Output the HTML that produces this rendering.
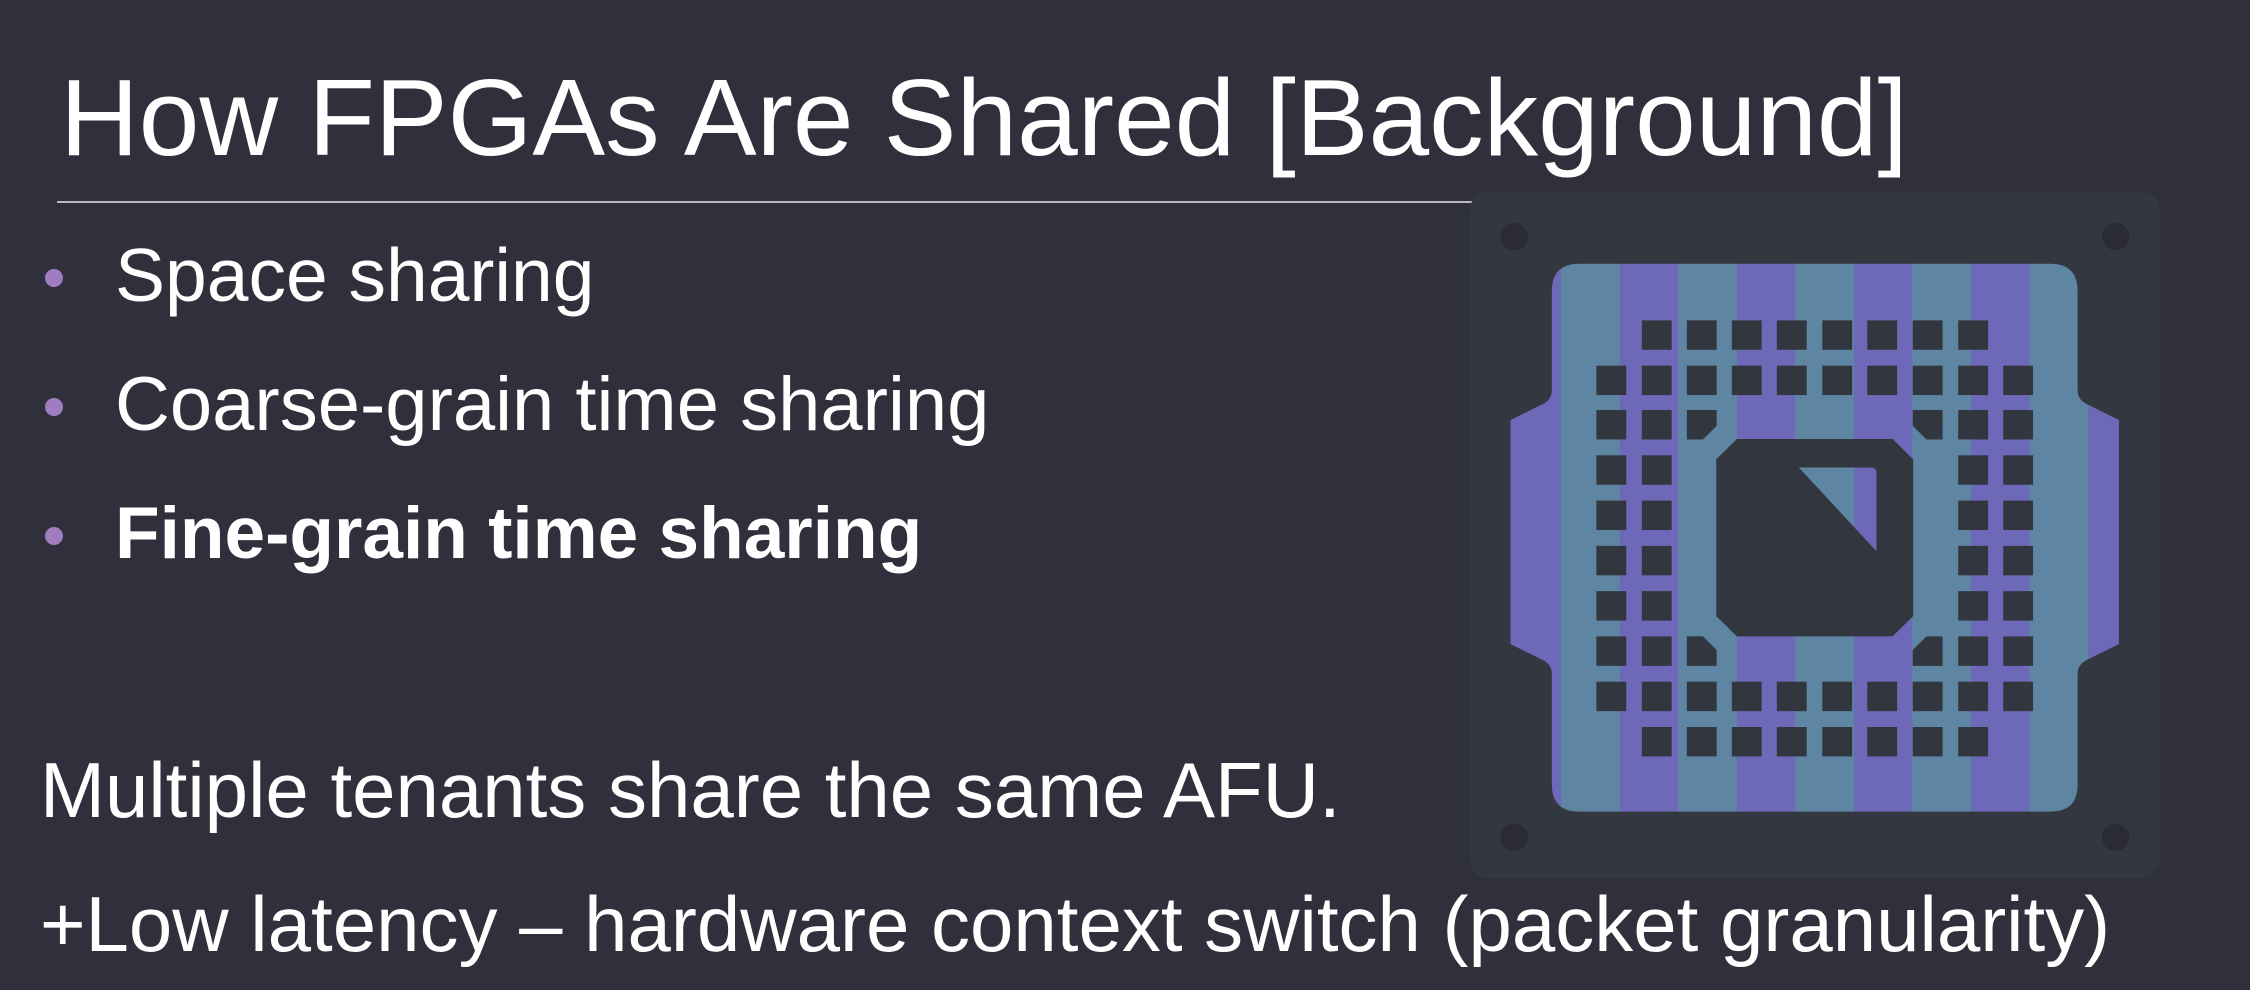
<!DOCTYPE html>
<html><head><meta charset="utf-8"><style>
html,body{margin:0;padding:0}
body{width:2250px;height:990px;background:#30303c;position:relative;overflow:hidden;font-family:"Liberation Sans",sans-serif;color:#fff}
.t{position:absolute;line-height:1;white-space:nowrap}
.dot{position:absolute;width:18px;height:18px;border-radius:50%;background:#a07cc0}
</style></head><body>
<div class="t" style="left:60px;top:64px;font-size:109px;">How FPGAs Are Shared [Background]</div>
<div style="position:absolute;left:57px;top:201px;width:1420px;height:2px;background:#b8b8c0"></div>
<div class="dot" style="left:45px;top:269px"></div>
<div class="dot" style="left:45px;top:398px"></div>
<div class="dot" style="left:45px;top:527px"></div>
<div class="t" style="left:115px;top:238px;font-size:75px;">Space sharing</div>
<div class="t" style="left:115px;top:367px;font-size:76px;">Coarse-grain time sharing</div>
<div class="t" style="left:115px;top:497px;font-size:73px;font-weight:bold;">Fine-grain time sharing</div>
<div class="t" style="left:40px;top:751px;font-size:78px;">Multiple tenants share the same AFU.</div>
<div class="t" style="left:40px;top:885px;font-size:78px;">+Low latency – hardware context switch (packet granularity)</div>

<svg style="position:absolute;left:1460px;top:180px" width="720" height="710" viewBox="0 0 1568 1568" preserveAspectRatio="none">
<defs>
<pattern id="st" patternUnits="userSpaceOnUse" x="220" y="0" width="255" height="2000">
<rect x="0" y="0" width="128" height="2000" fill="#5e86a3"/>
<rect x="128" y="0" width="127" height="2000" fill="#6e68b8"/>
</pattern>
</defs>
<rect x="20" y="25" width="1505" height="1518" rx="45" fill="#323740"/>
<circle cx="118" cy="125" r="30" fill="#2a2b36"/>
<circle cx="1428" cy="125" r="30" fill="#2a2b36"/>
<circle cx="118" cy="1452" r="30" fill="#2a2b36"/>
<circle cx="1428" cy="1452" r="30" fill="#2a2b36"/>
<path fill="url(#st)" d="M260 185 H1285 Q1345 185 1345 245 V465 Q1345 485 1365 495 L1435 530 V1025 L1365 1060 Q1345 1070 1345 1090 V1335 Q1345 1395 1285 1395 H260 Q200 1395 200 1335 V1090 Q200 1070 180 1060 L110 1025 V530 L180 495 Q200 485 200 465 V245 Q200 185 260 185 Z"/>
<g fill="#31363f">
<g id="r1"><rect x="396" y="310" width="65" height="65"/><rect x="494" y="310" width="65" height="65"/><rect x="592" y="310" width="65" height="65"/><rect x="690" y="310" width="65" height="65"/><rect x="789" y="310" width="65" height="65"/><rect x="887" y="310" width="65" height="65"/><rect x="986" y="310" width="65" height="65"/><rect x="1085" y="310" width="65" height="65"/></g>
<use href="#r1" y="898"/>
<g id="r2"><rect x="297" y="410" width="65" height="65"/><rect x="396" y="410" width="65" height="65"/><rect x="494" y="410" width="65" height="65"/><rect x="592" y="410" width="65" height="65"/><rect x="690" y="410" width="65" height="65"/><rect x="789" y="410" width="65" height="65"/><rect x="887" y="410" width="65" height="65"/><rect x="986" y="410" width="65" height="65"/><rect x="1085" y="410" width="65" height="65"/><rect x="1183" y="410" width="65" height="65"/></g>
<use href="#r2" y="698"/>
<g id="side"><rect x="297" y="508" width="65" height="65"/><rect x="396" y="508" width="65" height="65"/><rect x="1085" y="508" width="65" height="65"/><rect x="1183" y="508" width="65" height="65"/></g>
<use href="#side" y="100"/><use href="#side" y="200"/><use href="#side" y="300"/><use href="#side" y="400"/><use href="#side" y="500"/>
<polygon points="494,508 559,508 559,543 529,573 494,573"/>
<polygon points="986,508 1051,508 1051,573 1016,573 986,543"/>
<polygon points="494,1008 529,1008 559,1038 559,1073 494,1073"/>
<polygon points="1016,1008 1051,1008 1051,1073 986,1073 986,1038"/>
<polygon points="603,572 942,572 987,617 987,963 942,1008 603,1008 558,963 558,617"/>
</g>
<path fill="url(#st)" d="M738 635 H895 Q907 635 907 647 V820 Z"/>
</svg>
</body></html>
